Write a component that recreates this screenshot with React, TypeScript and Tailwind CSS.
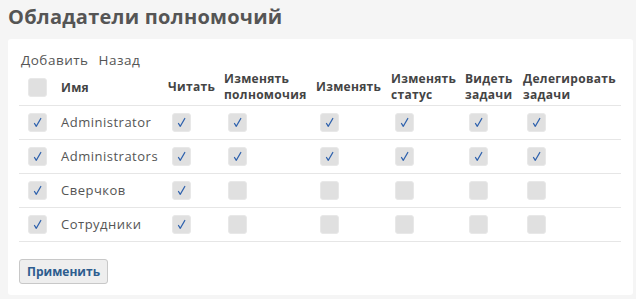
import React from 'react';

type Row = { name: string; perms: boolean[] };

const rows: Row[] = [
  { name: 'Administrator', perms: [true, true, true, true, true, true] },
  { name: 'Administrators', perms: [true, true, true, true, true, true] },
  { name: 'Сверчков', perms: [true, false, false, false, false, false] },
  { name: 'Сотрудники', perms: [true, false, false, false, false, false] },
];

const headers: [string, string?][] = [
  ['Читать'],
  ['Изменять', 'полномочия'],
  ['Изменять'],
  ['Изменять', 'статус'],
  ['Видеть', 'задачи'],
  ['Делегировать', 'задачи'],
];

const cols = 'grid grid-cols-[37px_107px_56px_92px_75px_74px_58px_103px]';

const Box = ({ checked }: { checked: boolean }) => (
  <div className="w-[19px] h-[19px] rounded-[3px] bg-[#e0e0e0] border border-[#e8e8e8] flex items-center justify-center">
    {checked && (
      <svg width="13" height="13" viewBox="0 0 13 13">
        <path d="M3.5 7.5 L5.3 10.3 L9.8 2.5" fill="none" stroke="#2f62ad" strokeWidth="1.3" strokeLinecap="round" strokeLinejoin="round" />
      </svg>
    )}
  </div>
);

const App = () => {
  return (
    <div className="w-[636px] h-[299px] bg-[#f5f5f5] overflow-hidden font-['Open_Sans',sans-serif] text-[#555]">
      <h1 className="pl-2 pt-[3px] h-[39px] text-[20px] font-bold leading-[28px] tracking-[0.25px] text-[#555]">Обладатели полномочий</h1>

      <div className="ml-2 w-[625px] h-[256px] bg-white rounded-[3px] px-[11px] pt-[11px]">
        <div className="flex gap-[10px] pl-[2px] text-[13.5px] leading-[20px] tracking-[0.5px] text-[#555]">
          <span>Добавить</span>
          <span>Назад</span>
        </div>

        <div className="w-[602px]">
          <div className={`${cols} h-[36px] items-center border-b border-[#e6e6e6] text-[12px] font-bold leading-[16px] tracking-[0.3px] text-[#444]`}>
            <div className="pl-[9px]">
              <Box checked={false} />
            </div>
            <div className="pl-[5px]">Имя</div>
            {headers.map(([a, b]) => (
              <div key={a + (b ?? '')} className="pl-[5px] pb-[1px] whitespace-nowrap">
                <div>{a}</div>
                {b && <div>{b}</div>}
              </div>
            ))}
          </div>

          {rows.map((r) => (
            <div key={r.name} className={`${cols} h-[34px] items-center border-b border-[#e6e6e6] text-[13px] tracking-[0.5px] text-[#555]`}>
              <div className="pl-[9px]">
                <Box checked />
              </div>
              <div className="pl-[5px]">{r.name}</div>
              {r.perms.map((p, i) => (
                <div key={i} className="pl-[9px]">
                  <Box checked={p} />
                </div>
              ))}
            </div>
          ))}
        </div>

        <button className="mt-[17px] h-[25px] px-[7px] rounded-[3px] bg-[#eeeeee] border border-[#c8c8c8] text-[12px] font-bold text-[#2d5d8f] leading-[20px]">
          Применить
        </button>
      </div>
    </div>
  );
};

export default App;
